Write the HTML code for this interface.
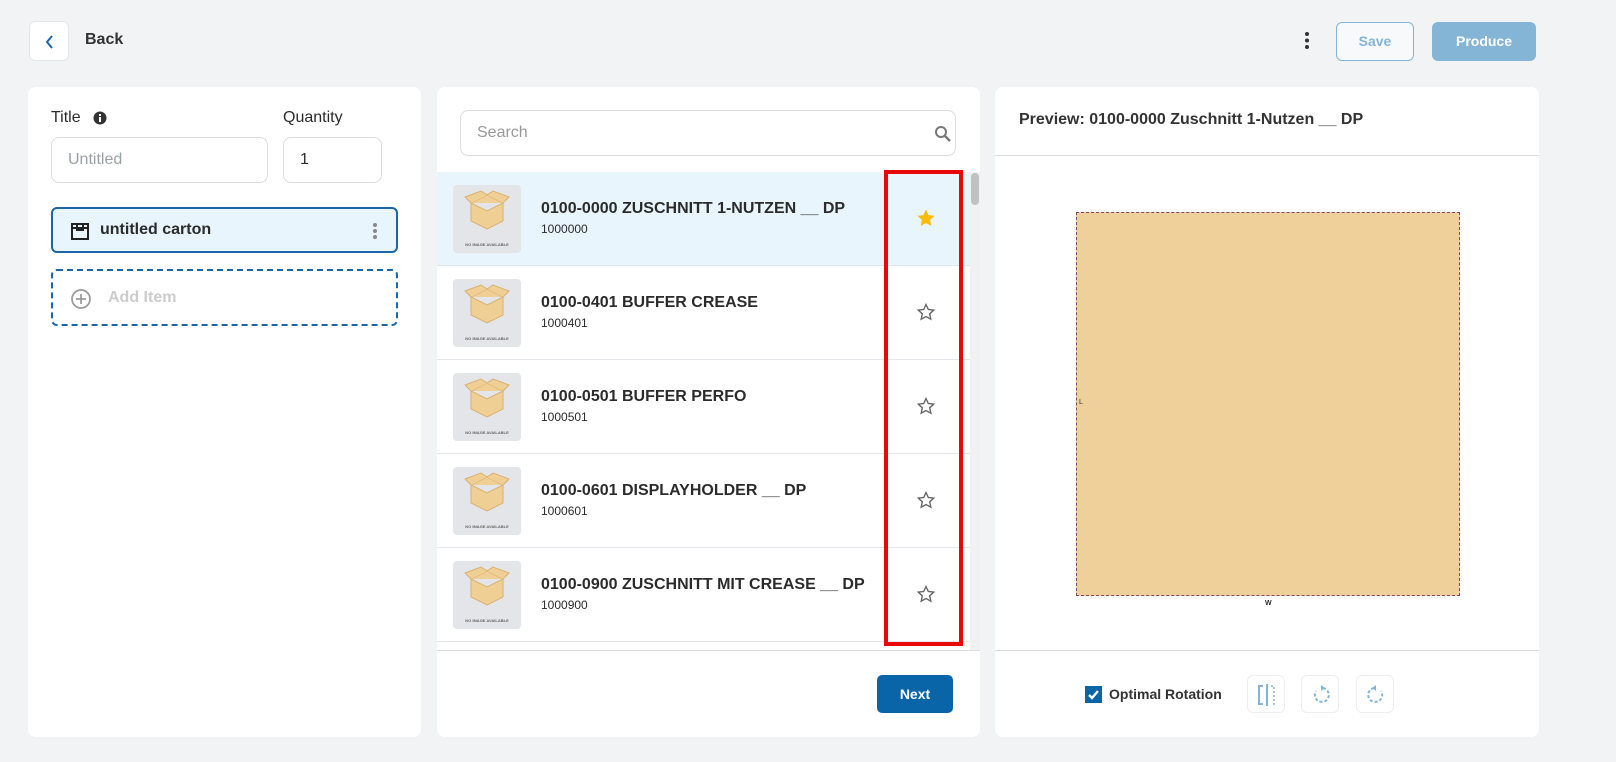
<!DOCTYPE html>
<html><head><meta charset="utf-8"><style>
*{box-sizing:border-box;margin:0;padding:0}
body{width:1616px;height:762px;background:#f2f3f5;font-family:"Liberation Sans",sans-serif;color:#2b2b2b;position:relative;overflow:hidden}
.abs{position:absolute}
.panel{position:absolute;background:#fff;border-radius:8px;top:87px;height:650px}
.input{position:absolute;border:1px solid #ddd;border-radius:8px;background:#fff;font-size:16px;padding-left:16px;display:flex;align-items:center}
.row{position:absolute;left:0;width:533px;height:94px;border-bottom:1px solid #e3e6ea}
.thumb{position:absolute;left:16px;top:13px;width:68px;height:68px;background:#e3e5e8;border-radius:4px}
.thumb svg{position:absolute;left:0;top:-6px}
.thumb span{position:absolute;left:0;bottom:6px;width:100%;text-align:center;font-size:4px;color:#666;font-weight:bold;white-space:nowrap}
.name{position:absolute;left:104px;top:28px;font-size:16px;font-weight:bold;color:#2b2b2b}
.code{position:absolute;left:104px;top:50px;font-size:12px}
.star{position:absolute;left:479px;top:36px}
.ib{position:absolute;top:675px;width:38px;height:38px;border:1px solid #eee;border-radius:6px;background:#fff}
</style></head><body>
<div class="abs" style="left:29px;top:21px;width:40px;height:40px;background:#fff;border:1px solid #e4e6e9;border-radius:6px"><svg width="40" height="40"><path d="M22 14l-5 6 5 6" fill="none" stroke="#1a66a8" stroke-width="2"/></svg></div>
<div class="abs" style="left:85px;top:31px;font-size:16px;font-weight:bold;color:#333">Back</div>
<svg class="abs" style="left:1300px;top:31px" width="14" height="20"><circle cx="7" cy="3" r="2" fill="#333"/><circle cx="7" cy="9.5" r="2" fill="#333"/><circle cx="7" cy="16" r="2" fill="#333"/></svg>
<div class="abs" style="left:1336px;top:22px;width:78px;height:39px;border:1px solid #85b5d6;border-radius:6px;background:#f7f9fb;color:#85b5d6;font-weight:bold;font-size:14px;text-align:center;line-height:37px">Save</div>
<div class="abs" style="left:1432px;top:22px;width:104px;height:39px;border-radius:6px;background:#85b5d6;color:#fff;font-weight:bold;font-size:14px;text-align:center;line-height:39px">Produce</div>

<div class="panel" style="left:28px;width:393px">
 <div class="abs" style="left:23px;top:22px;font-size:16px">Title</div>
 <svg class="abs" style="left:65px;top:24px" width="14" height="14"><circle cx="7" cy="7" r="6.5" fill="#333"/><rect x="6" y="6" width="2" height="5" fill="#fff"/><rect x="6" y="3" width="2" height="2" fill="#fff"/></svg>
 <div class="abs" style="left:255px;top:22px;font-size:16px">Quantity</div>
 <div class="input" style="left:23px;top:50px;width:217px;height:46px;color:#9aa0a6">Untitled</div>
 <div class="input" style="left:255px;top:50px;width:99px;height:46px">1</div>
 <div class="abs" style="left:23px;top:120px;width:347px;height:46px;border:2px solid #1a66a8;border-radius:6px;background:#e8f5fd">
  <svg class="abs" style="left:18px;top:12px" width="18" height="19"><rect x="1" y="3" width="16" height="15" fill="none" stroke="#222" stroke-width="2"/><path d="M1 7h16M6 3v6h6V3" fill="none" stroke="#222" stroke-width="2"/></svg>
  <div class="abs" style="left:47px;top:12px;font-size:16px;font-weight:bold">untitled carton</div>
  <svg class="abs" style="left:319px;top:13px" width="6" height="18"><circle cx="3" cy="3" r="2" fill="#888"/><circle cx="3" cy="9" r="2" fill="#888"/><circle cx="3" cy="15" r="2" fill="#888"/></svg>
 </div>
 <div class="abs" style="left:23px;top:182px;width:347px;height:57px;border:2px dashed #1a66a8;border-radius:6px">
  <svg class="abs" style="left:17px;top:17px" width="22" height="22"><circle cx="11" cy="11" r="9" fill="none" stroke="#999" stroke-width="1.7"/><path d="M11 6v10M6 11h10" stroke="#999" stroke-width="1.7"/></svg>
  <div class="abs" style="left:55px;top:18px;font-size:16px;font-weight:bold;color:#ccc">Add Item</div>
 </div>
</div>

<div class="panel" style="left:437px;width:543px;overflow:hidden">
 <div class="input" style="left:23px;top:23px;width:496px;height:46px;color:#999">Search</div>
 <svg class="abs" style="left:497px;top:38px" width="18" height="18"><circle cx="7" cy="7" r="5" fill="none" stroke="#777" stroke-width="2"/><path d="M11 11l5 5" stroke="#777" stroke-width="2.4"/></svg>
 <div class="abs" style="left:0;top:85px;width:533px;height:478px">
  <div class="row" style="top:0;background:#e8f5fd"><div class="thumb"><svg width="68" height="68"><path d="M18 24l16-8 16 8-16 8z M18 24v18l16 8 16-8V24" fill="#f0cf95" stroke="#d9b071"/><path d="M18 24l-6-6 16-6 6 4M50 24l6-6-16-6-6 4" fill="#f0cf95" stroke="#d9b071"/></svg><span>NO IMAGE AVAILABLE</span></div><div class="name">0100-0000 ZUSCHNITT 1-NUTZEN __ DP</div><div class="code">1000000</div><svg class="star" width="20" height="20"><path d="M10 1.5l2.6 5.6 6 .7-4.5 4.1 1.2 6L10 15l-5.3 2.9 1.2-6L1.4 7.8l6-.7z" fill="#fbbc04"/></svg></div>
  <div class="row" style="top:94px"><div class="thumb"><svg width="68" height="68"><path d="M18 24l16-8 16 8-16 8z M18 24v18l16 8 16-8V24" fill="#f0cf95" stroke="#d9b071"/><path d="M18 24l-6-6 16-6 6 4M50 24l6-6-16-6-6 4" fill="#f0cf95" stroke="#d9b071"/></svg><span>NO IMAGE AVAILABLE</span></div><div class="name">0100-0401 BUFFER CREASE</div><div class="code">1000401</div><svg class="star" width="20" height="20"><path d="M10 2.5l2.3 5 5.4.6-4 3.7 1.1 5.4L10 14.5l-4.8 2.7 1.1-5.4-4-3.7 5.4-.6z" fill="none" stroke="#666" stroke-width="1.4"/></svg></div>
  <div class="row" style="top:188px"><div class="thumb"><svg width="68" height="68"><path d="M18 24l16-8 16 8-16 8z M18 24v18l16 8 16-8V24" fill="#f0cf95" stroke="#d9b071"/><path d="M18 24l-6-6 16-6 6 4M50 24l6-6-16-6-6 4" fill="#f0cf95" stroke="#d9b071"/></svg><span>NO IMAGE AVAILABLE</span></div><div class="name">0100-0501 BUFFER PERFO</div><div class="code">1000501</div><svg class="star" width="20" height="20"><path d="M10 2.5l2.3 5 5.4.6-4 3.7 1.1 5.4L10 14.5l-4.8 2.7 1.1-5.4-4-3.7 5.4-.6z" fill="none" stroke="#666" stroke-width="1.4"/></svg></div>
  <div class="row" style="top:282px"><div class="thumb"><svg width="68" height="68"><path d="M18 24l16-8 16 8-16 8z M18 24v18l16 8 16-8V24" fill="#f0cf95" stroke="#d9b071"/><path d="M18 24l-6-6 16-6 6 4M50 24l6-6-16-6-6 4" fill="#f0cf95" stroke="#d9b071"/></svg><span>NO IMAGE AVAILABLE</span></div><div class="name">0100-0601 DISPLAYHOLDER __ DP</div><div class="code">1000601</div><svg class="star" width="20" height="20"><path d="M10 2.5l2.3 5 5.4.6-4 3.7 1.1 5.4L10 14.5l-4.8 2.7 1.1-5.4-4-3.7 5.4-.6z" fill="none" stroke="#666" stroke-width="1.4"/></svg></div>
  <div class="row" style="top:376px"><div class="thumb"><svg width="68" height="68"><path d="M18 24l16-8 16 8-16 8z M18 24v18l16 8 16-8V24" fill="#f0cf95" stroke="#d9b071"/><path d="M18 24l-6-6 16-6 6 4M50 24l6-6-16-6-6 4" fill="#f0cf95" stroke="#d9b071"/></svg><span>NO IMAGE AVAILABLE</span></div><div class="name">0100-0900 ZUSCHNITT MIT CREASE __ DP</div><div class="code">1000900</div><svg class="star" width="20" height="20"><path d="M10 2.5l2.3 5 5.4.6-4 3.7 1.1 5.4L10 14.5l-4.8 2.7 1.1-5.4-4-3.7 5.4-.6z" fill="none" stroke="#666" stroke-width="1.4"/></svg></div>
 </div>
 <div class="abs" style="left:533px;top:85px;width:10px;height:478px;background:#f1f1f1"><div style="margin:1px 1px;width:8px;height:32px;background:#c1c1c1;border-radius:4px"></div></div>
 <div class="abs" style="left:0;top:563px;width:543px;height:1px;background:#ddd"></div>
 <div class="abs" style="left:447px;top:83px;width:79px;height:476px;border:4px solid #e8070b"></div>
 <div class="abs" style="left:440px;top:588px;width:76px;height:38px;background:#0a64a8;border-radius:5px;color:#fff;font-weight:bold;font-size:14px;text-align:center;line-height:38px">Next</div>
</div>

<div class="panel" style="left:995px;width:544px">
 <div class="abs" style="left:24px;top:24px;font-size:16px;font-weight:bold;color:#333">Preview: 0100-0000 Zuschnitt 1-Nutzen __ DP</div>
 <div class="abs" style="left:0;top:68px;width:544px;height:1px;background:#ddd"></div>
 <div class="abs" style="left:81px;top:125px;width:384px;height:384px;background:#f0d09a;border:1px dashed #7a4a6a"></div>
 <div class="abs" style="left:84px;top:312px;font-size:7px">L</div>
 <div class="abs" style="left:270px;top:513px;font-size:7px;font-weight:bold">W</div>
 <div class="abs" style="left:0;top:563px;width:544px;height:1px;background:#ddd"></div>
 <svg class="abs" style="left:90px;top:599px" width="17" height="17"><rect width="17" height="17" fill="#0a64a8"/><path d="M4 9l3 3 6-7" fill="none" stroke="#fff" stroke-width="2.4"/></svg>
 <div class="abs" style="left:114px;top:599px;font-size:14px;font-weight:bold;color:#333">Optimal Rotation</div>
</div>
<div class="ib" style="left:1247px"><svg width="38" height="38"><path d="M15 10h-4v18h4" fill="none" stroke="#85b5d6" stroke-width="2"/><path d="M19 8v22" stroke="#85b5d6" stroke-width="2"/><path d="M23 10h3v18h-3" fill="none" stroke="#85b5d6" stroke-width="1.5" stroke-dasharray="2 2"/></svg></div>
<div class="ib" style="left:1301px"><svg width="38" height="38"><path d="M21 12a7 7 0 1 1-7 3" fill="none" stroke="#85b5d6" stroke-width="2" stroke-dasharray="3 2"/><path d="M19 9l4 3-4 3z" fill="#85b5d6"/></svg></div>
<div class="ib" style="left:1356px"><svg width="38" height="38"><path d="M17 12a7 7 0 1 0 7 3" fill="none" stroke="#85b5d6" stroke-width="2" stroke-dasharray="3 2"/><path d="M19 9l-4 3 4 3z" fill="#85b5d6"/></svg></div>
</body></html>
